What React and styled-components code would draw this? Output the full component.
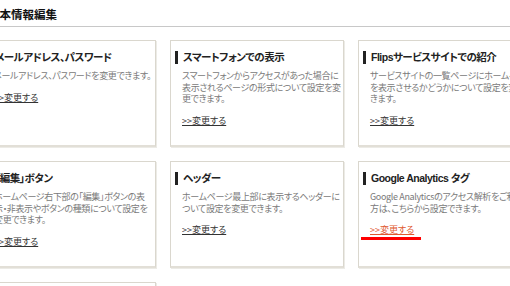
import React from "react";
import styled, { createGlobalStyle } from "styled-components";

const Global = createGlobalStyle`
  html, body { margin: 0; padding: 0; background: #fff; overflow: hidden; }
  body { font-family: "Noto Sans CJK JP", "Liberation Sans", sans-serif; }
`;

const Page = styled.div`
  width: 600px;
  margin-left: -18px;
`;

const Heading = styled.h2`
  margin: 0 0 13px 18px;
  padding: 6px 0 4px 0;
  height: 16px;
  line-height: 16px;
  font-size: 11.5px;
  font-weight: bold;
  color: #111;
  text-indent: -12px;
  border-bottom: 1px solid #c8c8c8;
`;

const Grid = styled.div`
  display: grid;
  grid-template-columns: repeat(3, 174px);
  grid-auto-rows: 107px;
  column-gap: 14px;
  row-gap: 14px;
`;

const Card = styled.section`
  position: relative;
  box-sizing: border-box;
  border: 1px solid #dad7ce;
  border-bottom: 2px solid #e2dfd7;
  box-shadow: 1px 1px 0 #ecebe6;
  padding: 10px 11px 0 11px;
  background: #fff;
  overflow: hidden;
  white-space: nowrap;
`;

const Title = styled.h3`
  margin: 0 0 6px -7px;
  padding-left: 5px;
  border-left: 3px solid #222;
  height: 13px;
  line-height: 13px;
  font-family: "Liberation Sans", "Noto Sans CJK JP", sans-serif;
  font-size: 10.5px;
  font-weight: bold;
  letter-spacing: -0.5px;
  color: #222;
  font-feature-settings: "palt";
`;

const Desc = styled.p`
  margin: 0;
  font-size: 9px;
  line-height: 11.5px;
  letter-spacing: -0.35px;
  color: #7a7a7a;
  font-feature-settings: "palt";
`;

const Link = styled.a`
  display: inline-block;
  margin-top: 8px;
  font-size: 9px;
  line-height: 12px;
  color: ${(p) => (p.$active ? "#e0582f" : "#333")};
  text-decoration: underline;
  font-feature-settings: "palt";
`;

const Mark = styled.span`
  position: absolute;
  left: 2px;
  top: 75px;
  width: 60px;
  height: 3px;
  background: #f00;
`;

const cards = [
  { title: "メールアドレス、パスワード", lines: ["メールアドレス、パスワードを変更できます。"] },
  { title: "スマートフォンでの表示", lines: ["スマートフォンからアクセスがあった場合に", "表示されるページの形式について設定を変", "更できます。"] },
  { title: "Flipsサービスサイトでの紹介", lines: ["サービスサイトの一覧ページにホームページ", "を表示させるかどうかについて設定を変更で", "きます。"] },
  { title: "「編集」ボタン", lines: ["ホームページ右下部の「編集」ボタンの表", "示・非表示やボタンの種類について設定を", "変更できます。"] },
  { title: "ヘッダー", lines: ["ホームページ最上部に表示するヘッダーに", "ついて設定を変更できます。"] },
  { title: "Google Analytics タグ", lines: ["Google Analyticsのアクセス解析をご利用の", "方は、こちらから設定できます。"], active: true },
];

export default function App() {
  return (
    <>
      <Global />
      <Page>
        <Heading>基本情報編集</Heading>
        <Grid>
          {cards.map((c, i) => (
            <Card key={i}>
              <Title>{c.title}</Title>
              <Desc>
                {c.lines.map((l, j) => (
                  <React.Fragment key={j}>
                    {l}
                    {j < c.lines.length - 1 && <br />}
                  </React.Fragment>
                ))}
              </Desc>
              <Link href="#" $active={c.active}>&gt;&gt;変更する</Link>
              {c.active && <Mark />}
            </Card>
          ))}
          <Card />
        </Grid>
      </Page>
    </>
  );
}
